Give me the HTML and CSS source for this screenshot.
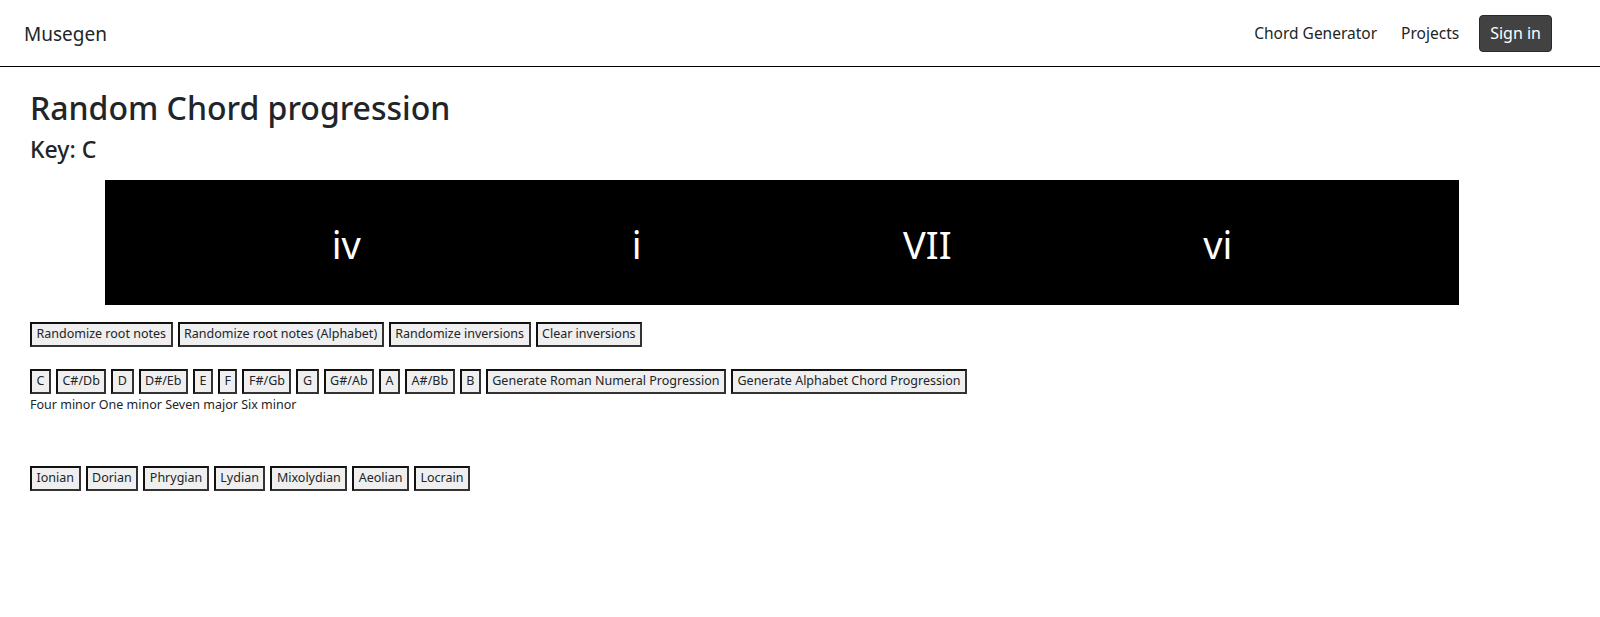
FILE: index.html
```html
<!DOCTYPE html>
<html lang="en">
<head>
<meta charset="utf-8">
<title>Musegen</title>
<link rel="stylesheet" href="styles.css">
</head>
<body>
<nav class="navbar">
  <a class="brand" href="#">Musegen</a>
  <div class="nav-links">
    <a class="nav-link" href="#">Chord Generator</a>
    <a class="nav-link" href="#">Projects</a>
    <button class="signin">Sign in</button>
  </div>
</nav>
<main class="content">
  <h1 class="title">Random Chord progression</h1>
  <h2 class="key">Key: C</h2>
  <div class="chord-box">
    <div class="chord-row">
      <div class="chord">iv</div>
      <div class="chord">i</div>
      <div class="chord">VII</div>
      <div class="chord">vi</div>
    </div>
  </div>
  <div class="btn-row first">
    <button class="btn">Randomize root notes</button>
    <button class="btn">Randomize root notes (Alphabet)</button>
    <button class="btn">Randomize inversions</button>
    <button class="btn">Clear inversions</button>
  </div>
  <div class="btn-row second">
    <button class="btn">C</button>
    <button class="btn">C#/Db</button>
    <button class="btn">D</button>
    <button class="btn">D#/Eb</button>
    <button class="btn">E</button>
    <button class="btn">F</button>
    <button class="btn">F#/Gb</button>
    <button class="btn">G</button>
    <button class="btn">G#/Ab</button>
    <button class="btn">A</button>
    <button class="btn">A#/Bb</button>
    <button class="btn">B</button>
    <button class="btn">Generate Roman Numeral Progression</button>
    <button class="btn">Generate Alphabet Chord Progression</button>
  </div>
  <p class="description">Four minor One minor Seven major Six minor</p>
  <div class="btn-row modes">
    <button class="btn">Ionian</button>
    <button class="btn">Dorian</button>
    <button class="btn">Phrygian</button>
    <button class="btn">Lydian</button>
    <button class="btn">Mixolydian</button>
    <button class="btn">Aeolian</button>
    <button class="btn">Locrain</button>
  </div>
</main>
</body>
</html>
```

FILE: styles.css
```css
* { box-sizing: border-box; }
html, body {
  margin: 0;
  padding: 0;
  background: #fff;
  color: #212529;
  font-family: "Noto Sans", "Open Sans", sans-serif;
}
.navbar {
  height: 67px;
  display: flex;
  align-items: center;
  justify-content: space-between;
  padding: 0 48px 0 24px;
  border-bottom: 1px solid #000;
}
.brand {
  font-size: 19px;
  color: #212529;
  text-decoration: none;
  padding-top: 1px;
}
.nav-links {
  display: flex;
  align-items: center;
}
.nav-link {
  font-size: 15.5px;
  color: #212529;
  text-decoration: none;
  padding: 8px 11px;
}
.nav-link + .nav-link { margin-left: 2px; }
.signin {
  margin-left: 9px;
  background: #424242;
  color: #fff;
  border: 1px solid #2a2a2a;
  border-radius: 4px;
  font-family: inherit;
  font-size: 16px;
  height: 37px;
  padding: 0 10px;
}
.content {
  padding: 0 30px;
}
.title {
  margin: 21px 0 0;
  font-size: 32px;
  font-weight: 500;
  line-height: 40px;
}
.key {
  margin: 6px 0 0;
  font-size: 23px;
  font-weight: 500;
  line-height: 30px;
}
.chord-box {
  background: #000;
  margin: 16px 111px 0 75px;
  height: 125px;
  display: flex;
  align-items: center;
  justify-content: center;
}
.chord-row {
  display: grid;
  grid-template-columns: repeat(4, 290.5px);
  color: #fff;
  font-size: 38px;
  line-height: 1;
}
.chord {
  text-align: center;
  padding-top: 2px;
}
.btn-row {
  display: flex;
  flex-wrap: wrap;
  gap: 5px;
}
.btn-row.first { margin-top: 17px; }
.btn-row.second { margin-top: 22px; }
.btn-row.modes { margin-top: 53px; }
.btn {
  font-family: inherit;
  font-size: 12.5px;
  color: #212529;
  background: #efefef;
  border: 2px solid #111;
  border-color: #111 #333 #333 #111;
  height: 25px;
  padding: 0 4.5px;
  line-height: 1;
}
.description {
  margin: 2px 0 0;
  font-size: 12.5px;
  line-height: 17px;
}
```
